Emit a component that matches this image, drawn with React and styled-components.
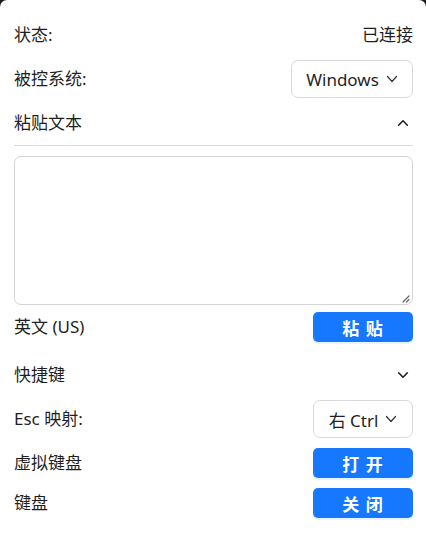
import styled, { createGlobalStyle } from 'styled-components';

const Global = createGlobalStyle`
    html, body {
        margin: 0;
        padding: 0;
        background: #1c1c1c;
    }
    * { box-sizing: border-box; }
`;

function Chevron({ up, size = 14 }) {
    return (
        <svg width={size} height={size} viewBox="0 0 16 16" fill="none">
            <path
                d={up ? 'M3 10.5 L8 5.5 L13 10.5' : 'M3 5.5 L8 10.5 L13 5.5'}
                stroke="#1f1f1f"
                strokeWidth="1.8"
                strokeLinecap="round"
                strokeLinejoin="round"
            />
        </svg>
    );
}

function ThinChevron() {
    return (
        <svg width="12" height="12" viewBox="0 0 12 12" fill="none">
            <path d="M1.5 3.5 L6 8.5 L10.5 3.5" stroke="#333" strokeWidth="1.2" strokeLinecap="round" strokeLinejoin="round" />
        </svg>
    );
}

function Resize() {
    return (
        <svg width="9" height="9" viewBox="0 0 9 9">
            <path d="M8 2 L2 8 M8 5.5 L5.5 8" stroke="#666" strokeWidth="1.2" strokeLinecap="round" />
        </svg>
    );
}

export default function App() {
    return (
        <>
            <Global />
            <Panel>
                <Row $h={44}>
                    <Label>状态:</Label>
                    <Label>已连接</Label>
                </Row>
                <Row $h={44}>
                    <Label>被控系统:</Label>
                    <Select $w={122}>Windows <ThinChevron /></Select>
                </Row>
                <Row $h={44}>
                    <Label>粘贴文本</Label>
                    <Toggle><Chevron up /></Toggle>
                </Row>
                <Divider />
                <TextBox>
                    <Grip><Resize /></Grip>
                </TextBox>
                <Row $h={44}>
                    <Label>英文 (US)</Label>
                    <Button>粘 贴</Button>
                </Row>
                <Row $h={44} $gap={4}>
                    <Label>快捷键</Label>
                    <Toggle><Chevron /></Toggle>
                </Row>
                <Row $h={44}>
                    <Label>Esc 映射:</Label>
                    <Select $w={100}>右 Ctrl <ThinChevron /></Select>
                </Row>
                <Row $h={44}>
                    <Label>虚拟键盘</Label>
                    <Button>打 开</Button>
                </Row>
                <Row $h={36}>
                    <Label>键盘</Label>
                    <Button>关 闭</Button>
                </Row>
            </Panel>
        </>
    );
}

const Panel = styled.div`
    width: 426px;
    height: 535px;
    background: #ffffff;
    border-radius: 7px 7px 0 0;
    padding: 13px 13px 0 14px;
    display: flex;
    flex-direction: column;
    font-family: "Noto Sans", "Noto Sans CJK SC", sans-serif;
    color: #1f1f1f;
`;

const Row = styled.div`
    height: ${({ $h }) => $h}px;
    margin-top: ${({ $gap }) => $gap || 0}px;
    display: flex;
    align-items: center;
    justify-content: space-between;
    flex-shrink: 0;
`;

const Label = styled.div`
    font-size: 17px;
    line-height: 22px;
    color: #1f1f1f;
`;

const Select = styled.div`
    width: ${({ $w }) => $w}px;
    height: 38px;
    border: 1px solid #d9d9d9;
    border-radius: 7px;
    display: flex;
    align-items: center;
    justify-content: center;
    gap: 7px;
    font-size: 17px;
    color: #1f1f1f;
`;

const Toggle = styled.div`
    width: 20px;
    display: flex;
    justify-content: center;
`;

const Divider = styled.div`
    height: 1px;
    background: #d9d9d9;
    margin: 0 0 10px 0;
    flex-shrink: 0;
`;

const TextBox = styled.div`
    height: 149px;
    flex-shrink: 0;
    border: 1px solid #d4d4d4;
    border-radius: 7px;
    position: relative;
`;

const Grip = styled.div`
    position: absolute;
    right: 2px;
    bottom: 1px;
    display: flex;
`;

const Button = styled.div`
    width: 100px;
    height: 30px;
    background: #1677ff;
    border-radius: 5px;
    box-shadow: 0 2px 0 rgba(5, 145, 255, 0.1);
    color: #ffffff;
    font-size: 17px;
    font-weight: 600;
    letter-spacing: 1px;
    display: flex;
    align-items: center;
    justify-content: center;
`;
